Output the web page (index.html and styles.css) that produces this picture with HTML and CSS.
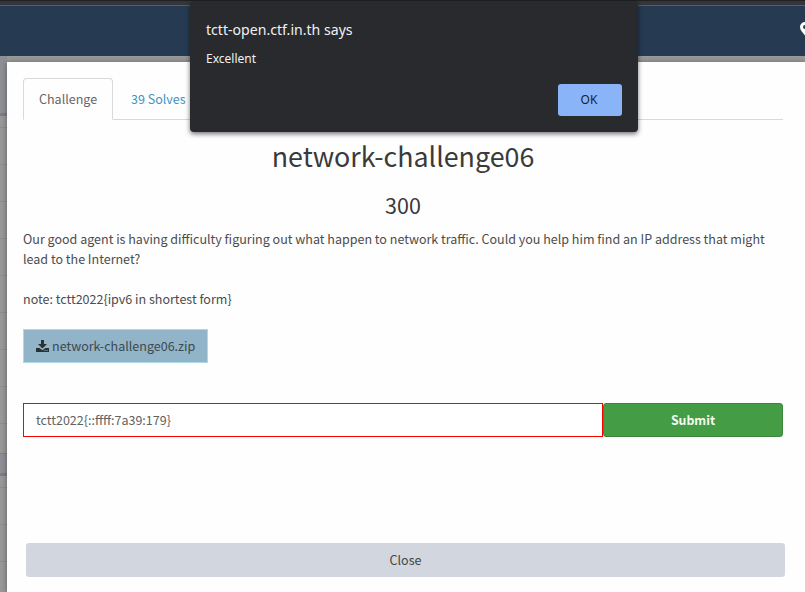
FILE: index.html
```
<!DOCTYPE html>
<html lang="en">
<head>
<meta charset="utf-8">
<title>network-challenge06</title>
<link rel="stylesheet" href="styles.css">
</head>
<body>
<div class="browser-edge"></div>
<header class="navbar">
  <svg class="pin" width="12" height="14" viewBox="0 0 12 14"><path fill="#fff" fill-rule="evenodd" d="M5 0a5 5 0 0 1 5 5c0 3-2.600 5.500-5 8.500C2.600 10.500 0 8 0 5a5 5 0 0 1 5-5zm0 3a2 2 0 1 0 0 4 2 2 0 0 0 0-4z"/></svg>
</header>
<div class="page">
  <div class="backdrop">
    <div class="band band-first"></div>
    <div class="rows rows-first"></div>
    <div class="band band-second"></div>
    <div class="rows rows-second"></div>
  </div>
  <main class="modal">
    <nav class="tabs">
      <a class="tab active">Challenge</a>
      <a class="tab">39 Solves</a>
    </nav>
    <h2>network-challenge06</h2>
    <h3>300</h3>
    <p class="desc">Our good agent is having difficulty figuring out what happen to network traffic. Could you help him find an IP address that might<br>lead to the Internet?<br><br>note: tctt2022{ipv6 in shortest form}</p>
    <a class="file"><svg width="13" height="13" viewBox="0 0 13 13"><path fill="#2b3033" d="M5 0h3v4h3L6.500 8.500 2 4h3zM0 8h3.500l3 2.300 3-2.300H13v4H0z"/><path fill="#92b4c8" d="M8.500 10h1v1h-1zM10.500 10h1v1h-1z"/></svg><span>network-challenge06.zip</span></a>
    <div class="answer">
      <div class="field">tctt2022{::ffff:7a39:179}</div>
      <button class="submit">Submit</button>
    </div>
    <button class="close">Close</button>
  </main>
</div>
<div class="dialog">
  <div class="title">tctt-open.ctf.in.th says</div>
  <div class="message">Excellent</div>
  <button class="ok">OK</button>
</div>
</body>
</html>
```
FILE: styles.css
```
* { box-sizing: border-box; }
body {
  margin: 0;
  height: 592px;
  overflow: hidden;
  display: flex;
  flex-direction: column;
  background: #999;
  font: 12.53px/20px "Noto Sans CJK SC", sans-serif;
  color: #4c4c4c;
}
button { font: inherit; padding: 0; }
.browser-edge {
  height: 6px;
  flex: none;
  background: linear-gradient(#202125 0 1px, #35363a 1px 5px, #5b5c60 5px);
}
.navbar {
  height: 50px;
  flex: none;
  background: #263b52;
  padding: 16px 0 0 800px;
}
.pin { display: block; }
.page { flex: 1; display: flex; min-height: 0; }
.backdrop { width: 7px; flex: none; display: flex; flex-direction: column; }
.band { background: #8f9096; border-bottom: 3px solid #7e7e88; flex: none; }
.band-first { height: 60px; }
.band-second { height: 23px; border-top: 1px solid #828287; }
.rows { background: repeating-linear-gradient(#999 0 36px, #8e8e8e 36px 37px); }
.rows-first { height: 337px; background-position: 0 12px; }
.rows-second { flex: 1; background-position: 0 12px; }
.rows-first, .rows-second { background-size: 100% 37px; }
.modal {
  width: 798px;
  flex: none;
  margin-top: 6px;
  padding: 16px 22px 0 16px;
  background: #fefefe;
  box-shadow: 0 1px 6px rgba(0, 0, 0, .4);
}
.tabs { display: flex; height: 42px; border-bottom: 1px solid #d9d9d9; }
.tab { height: 42px; padding: 10px 15px; border: 1px solid transparent; color: #3f94c2; white-space: nowrap; }
.tab + .tab { padding-left: 17px; }
.tab.active {
  width: 90px;
  color: #666;
  border-color: #d9d9d9;
  border-bottom-color: #fefefe;
  border-radius: 4px 4px 0 0;
  background: #fefefe;
}
h2 { margin: 16px 0 0; font-size: 26.800px; line-height: 40px; font-weight: 400; text-align: center; color: #3a3a3a; }
h3 { margin: 14px 0 0; font-size: 21.500px; line-height: 30px; font-weight: 400; text-align: center; color: #3a3a3a; }
.desc { margin: 9px 0 0; white-space: nowrap; }
.file {
  display: flex;
  align-items: center;
  gap: 3px;
  width: 185px;
  height: 34px;
  margin-top: 20px;
  padding-left: 12px;
  border: 1px solid #add8e6;
  background: #92b4c8;
  color: #3d4950;
}
.answer { display: flex; margin-top: 40px; }
.field { width: 580px; height: 34px; padding: 6px 12px; border: 1px solid #f00; background: #fff; color: #626262; }
.submit { width: 180px; height: 34px; border: 1px solid #3b863b; border-radius: 3px; background: #449d44; color: #f4faf4; font-weight: 700; font-size: 12.300px; }
.close { display: block; width: 759px; height: 34px; margin: 106px 0 0 3px; border: 0; border-radius: 3px; background: #d2d6df; color: #444; }
.dialog {
  position: absolute;
  left: 190px;
  top: 1px;
  width: 448px;
  height: 131px;
  padding: 18px 16px 16px;
  border-radius: 4px;
  background: #292a2d;
  box-shadow: 0 2px 5px rgba(0, 0, 0, .55);
  color: #f0f1f3;
  display: flex;
  flex-direction: column;
  font-family: "Noto Sans", sans-serif;
}
.title { font-size: 14.100px; line-height: 22px; }
.message { font-size: 12px; line-height: 18px; margin-top: 9px; }
.ok { width: 64px; height: 32px; margin: auto 0 0 auto; padding-right: 2px; border: 0; border-radius: 3px; background: #8ab4f8; color: #202124; font-size: 12px; }
```
